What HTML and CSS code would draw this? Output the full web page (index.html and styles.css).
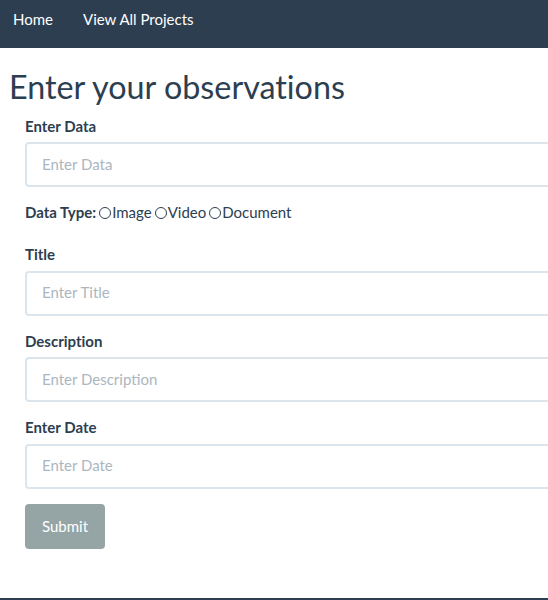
FILE: index.html
```html
<!DOCTYPE html>
<html lang="en">
<head>
<meta charset="utf-8">
<title>Enter your observations</title>
<link rel="stylesheet" href="styles.css">
</head>
<body>
<nav class="navbar">
  <a class="nav-link" href="#">Home</a>
  <a class="nav-link" href="#">View All Projects</a>
</nav>
<main class="page">
  <h1 class="page-title">Enter your observations</h1>
  <form class="obs-form">
    <div class="form-group">
      <label class="field-label">Enter Data</label>
      <input class="form-control" type="text" placeholder="Enter Data">
    </div>
    <div class="form-group type-group">
      <span class="field-label">Data Type:</span>
      <label class="radio-opt"><input class="radio" type="radio" name="dtype">Image</label>
      <label class="radio-opt"><input class="radio" type="radio" name="dtype">Video</label>
      <label class="radio-opt"><input class="radio" type="radio" name="dtype">Document</label>
    </div>
    <div class="form-group">
      <label class="field-label">Title</label>
      <input class="form-control" type="text" placeholder="Enter Title">
    </div>
    <div class="form-group">
      <label class="field-label">Description</label>
      <input class="form-control" type="text" placeholder="Enter Description">
    </div>
    <div class="form-group">
      <label class="field-label">Enter Date</label>
      <input class="form-control" type="text" placeholder="Enter Date">
    </div>
    <button class="btn-submit" type="button">Submit</button>
  </form>
</main>
<footer class="footer"></footer>
</body>
</html>
```
FILE: styles.css
```css
html, body {
  margin: 0;
  padding: 0;
  overflow-x: hidden;
}
body {
  font-family: Lato, "Open Sans", "Liberation Sans", sans-serif;
  font-size: 15px;
  line-height: 1.42857;
  color: #2c3e50;
  background: #fff;
  font-variant-ligatures: none;
}
.navbar {
  height: 48px;
  background: #2c3e50;
  display: flex;
  gap: 30px;
  padding: 9px 0 0 13px;
  box-sizing: border-box;
}
.nav-link {
  color: #fff;
  text-decoration: none;
  font-size: 15px;
  line-height: 21px;
}
.page {
  padding: 0 0 49px 0;
}
.page-title {
  font-size: 32.3px;
  font-weight: 400;
  line-height: 39px;
  margin: 19px 0 10px 9px;
}
.obs-form {
  margin-left: 25px;
  width: 560px;
}
.form-group {
  margin-bottom: 15px;
}
.field-label {
  display: block;
  font-weight: 700;
  margin-bottom: 5px;
}
.form-control {
  display: block;
  width: 100%;
  height: 45px;
  box-sizing: border-box;
  padding: 9px 15px 11px;
  font-family: inherit;
  font-size: 15px;
  color: #2c3e50;
  border: 2px solid #dce4ec;
  border-radius: 4px;
  outline: none;
}
.form-control::placeholder {
  color: #acb6c0;
}
.type-group {
  display: flex;
  align-items: center;
  height: 21px;
  margin-bottom: 21px;
}
.type-group .field-label {
  margin: 0 3px 0 0;
}
.radio-opt {
  display: inline-flex;
  align-items: center;
  margin-right: 3px;
}
.radio {
  appearance: none;
  -webkit-appearance: none;
  width: 12px;
  height: 12px;
  margin: 0 1px 0 0;
  border: 1px solid #2c3e50;
  border-radius: 50%;
  box-sizing: border-box;
}
.btn-submit {
  display: block;
  font-family: inherit;
  font-size: 15px;
  line-height: 21px;
  padding: 10px 15px;
  border: 2px solid #95a5a6;
  border-radius: 4px;
  background: #95a5a6;
  color: #fff;
}
.footer {
  height: 40px;
  background: #2c3e50;
}
```
